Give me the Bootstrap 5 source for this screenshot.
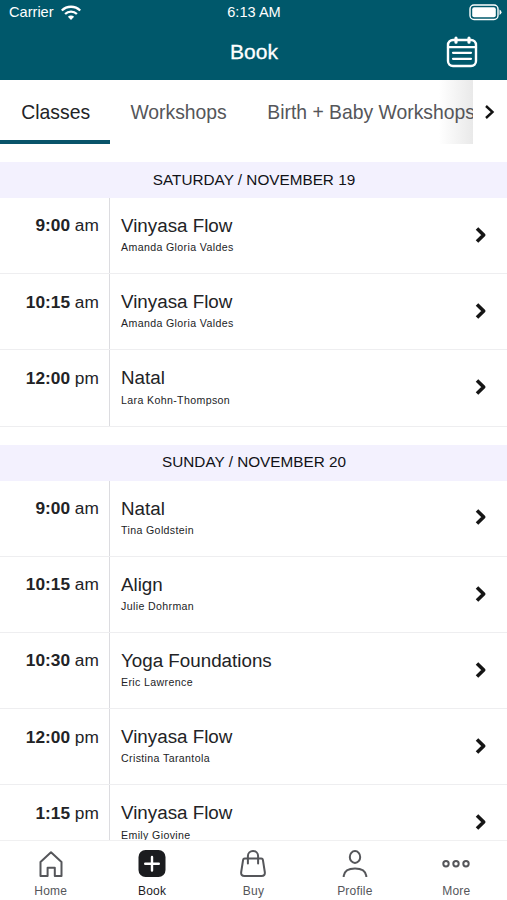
<!DOCTYPE html>
<html lang="en">
<head>
<meta charset="utf-8">
<meta name="viewport" content="width=device-width, initial-scale=1">
<title>Book</title>
<link href="https://cdn.jsdelivr.net/npm/bootstrap@5.3.0/dist/css/bootstrap.min.css" rel="stylesheet">
<style>
body{font-family:"Liberation Sans",Arial,sans-serif;color:#222326;background:#fff;line-height:1.2}
svg{display:block;flex:none}
.app{height:900px}
.topbar{background:#00586b;height:80px}
.status{height:25px;font-size:14.6px;padding:0 5px 0 9px}
.carrier{gap:7px}
.clock{margin-right:3px}
.title-row{height:54px;padding-right:29px}
.screen-title{font-size:21px;-webkit-text-stroke:.3px #fff;padding:0 0 1px 1px}
.side{width:32px;margin-left:29px}
.tabs{height:64px}
.tab-strip{width:473px;font-size:19.35px;color:#55565a;background:linear-gradient(90deg,rgba(215,215,215,0),rgba(215,215,215,.55)) right/34px 100% no-repeat}
.tab-strip a{color:inherit;text-decoration:none;padding-top:21px;white-space:nowrap}
.tab-strip .current{width:110.4px;padding-left:1px;border-bottom:4px solid #09546a;color:#222326}
.tab-strip .last{padding-left:24.5px}
.schedule{padding-top:18px}
.day{height:36px;background:#f3f1fe;font-size:15.3px;color:#111217;padding-left:1px}
.day-group{margin-bottom:18px}
.session{height:76.2px;border-bottom:1px solid #eeeef0}
.time{width:110px;border-right:1px solid #dcdce0;padding:17.4px 10.2px 0 0;font-size:17.3px}
.info{padding:17px 0 0 11px}
.class-name{font-size:18.8px;line-height:22px}
.teacher{font-size:10.6px;letter-spacing:.37px;line-height:14px;margin-top:3.2px}
.go{padding:0 19.5px 1.5px 0}
.bottombar{height:60px;border-top:1px solid #f0f0f1;color:#55565a;font-size:12px;letter-spacing:.2px}
.bottombar a{color:inherit;text-decoration:none;padding-top:8px;width:20%}
.bottombar .current{color:#1b1c1f}
.bottombar span{margin-top:5px}
</style>
</head>
<body>
<div class="app d-flex flex-column overflow-hidden">
  <header class="topbar text-white flex-shrink-0">
    <div class="status d-flex align-items-center">
      <div class="carrier col d-flex align-items-center"><span>Carrier</span>
        <svg width="20" height="16" viewBox="0 0 20 16" fill="none" stroke="#fff" stroke-width="2.3"><path d="M.8 5.500a13.200 13.200 0 0 1 18.400 0M4.100 9a8.400 8.400 0 0 1 11.800 0"/><path d="M10 15 6.900 11.800a4.400 4.400 0 0 1 6.200 0z" fill="#fff" stroke="none"/></svg>
      </div>
      <div class="clock">6:13 AM</div>
      <div class="col d-flex justify-content-end">
        <svg width="33" height="17" viewBox="0 0 33 17"><rect x="1" y="1" width="28" height="14.500" rx="4" fill="none" stroke="#fff" stroke-width="1.400"/><rect x="3.200" y="3.200" width="23.600" height="10.100" rx="2" fill="#fff"/><path d="M30.500 5.500q2 1 2 2.800t-2 2.800z" fill="#fff"/></svg>
      </div>
    </div>
    <div class="title-row d-flex align-items-center justify-content-between">
      <span class="side"></span>
      <span class="screen-title">Book</span>
      <svg width="32" height="32" viewBox="0 0 32 32" fill="none" stroke="#fff" stroke-width="2.400" stroke-linecap="round"><rect x="2" y="4" width="28" height="26" rx="5"/><path d="M2 11.200h28" stroke-width="2.200"/><path d="M10 2.200v4M23 2.200v4" stroke-width="3.200"/><path d="M7 16.800h18M7 22.800h18" stroke-width="2.200"/></svg>
    </div>
  </header>
  <nav class="tabs d-flex flex-shrink-0">
    <div class="tab-strip d-flex overflow-hidden">
      <a href="#" class="current text-center flex-shrink-0">Classes</a>
      <a href="#" class="ps-3 pe-3 ms-1">Workshops</a>
      <a href="#" class="last">Birth + Baby Workshops</a>
    </div>
    <div class="flex-fill d-flex align-items-center justify-content-center">
      <svg width="12" height="16" viewBox="0 0 12 16" fill="none" stroke="#111" stroke-width="2.400"><path d="m2 2 6.500 6L2 14"/></svg>
    </div>
  </nav>
  <main class="schedule flex-fill overflow-hidden" id="schedule"></main>
  <nav class="bottombar d-flex flex-shrink-0 bg-white">
    <a href="#" class="d-flex flex-column align-items-center"><svg width="30" height="30" viewBox="0 0 30 30" fill="none" stroke="currentColor" stroke-width="2" stroke-linejoin="round"><path d="M4.500 13 15 3.300 25.500 13v14h-6.700v-8.200h-7.200V27H4.500z"/></svg><span>Home</span></a>
    <a href="#" class="current d-flex flex-column align-items-center"><svg width="30" height="30" viewBox="0 0 30 30"><rect x="1.500" y="1" width="27" height="27" rx="7" fill="#1b1c1f"/><path d="M15 8v13.500M8.200 14.800h13.600" stroke="#fff" stroke-width="2.400" stroke-linecap="round"/></svg><span>Book</span></a>
    <a href="#" class="d-flex flex-column align-items-center"><svg width="30" height="30" viewBox="0 0 30 30" fill="none" stroke="currentColor" stroke-width="2" stroke-linecap="round" stroke-linejoin="round"><path d="M6.700 9.500h16.600q1.400 0 1.600 1.400L26.800 23q.5 4-3.300 4h-17q-3.800 0-3.300-4L5.100 10.900q.2-1.400 1.600-1.400z"/><path d="M9.900 14.500V7a5.100 5.100 0 0 1 10.200 0v7.500"/></svg><span>Buy</span></a>
    <a href="#" class="d-flex flex-column align-items-center"><svg width="30" height="30" viewBox="0 0 30 30" fill="none" stroke="currentColor" stroke-width="2"><ellipse cx="15" cy="8" rx="5.200" ry="5.900"/><path d="M3.700 28v-1.200C4.500 21.800 9 19.500 15 19.500s10.500 2.300 11.300 7.300V28"/></svg><span>Profile</span></a>
    <a href="#" class="d-flex flex-column align-items-center"><svg width="30" height="30" viewBox="0 0 30 30" fill="none" stroke="currentColor" stroke-width="2"><circle cx="5" cy="14.700" r="2.700"/><circle cx="15" cy="14.700" r="2.700"/><circle cx="25" cy="14.700" r="2.700"/></svg><span>More</span></a>
  </nav>
</div>
<script src="https://cdn.jsdelivr.net/npm/bootstrap@5.3.0/dist/js/bootstrap.bundle.min.js"></script>
<script>
const days = [
  ["SATURDAY / NOVEMBER 19", [
    ["9:00", "am", "Vinyasa Flow", "Amanda Gloria Valdes"],
    ["10:15", "am", "Vinyasa Flow", "Amanda Gloria Valdes"],
    ["12:00", "pm", "Natal", "Lara Kohn-Thompson"]]],
  ["SUNDAY / NOVEMBER 20", [
    ["9:00", "am", "Natal", "Tina Goldstein"],
    ["10:15", "am", "Align", "Julie Dohrman"],
    ["10:30", "am", "Yoga Foundations", "Eric Lawrence"],
    ["12:00", "pm", "Vinyasa Flow", "Cristina Tarantola"],
    ["1:15", "pm", "Vinyasa Flow", "Emily Giovine"]]]
];
document.getElementById("schedule").innerHTML = days.map(([day, sessions]) => `
  <section class="day-group">
    <div class="day d-flex align-items-center justify-content-center">${day}</div>
    ${sessions.map(([t, half, name, teacher]) => `
    <div class="session d-flex">
      <div class="time text-end flex-shrink-0"><b>${t}</b> ${half}</div>
      <div class="info flex-fill"><div class="class-name">${name}</div><div class="teacher">${teacher}</div></div>
      <div class="go d-flex align-items-center"><svg width="14" height="18" viewBox="0 0 14 18" fill="none" stroke="#151515" stroke-width="3.600" stroke-linejoin="round"><path d="m3 2.500 6.700 6.500L3 15.500"/></svg></div>
    </div>`).join("")}
  </section>`).join("");
</script>
</body>
</html>
